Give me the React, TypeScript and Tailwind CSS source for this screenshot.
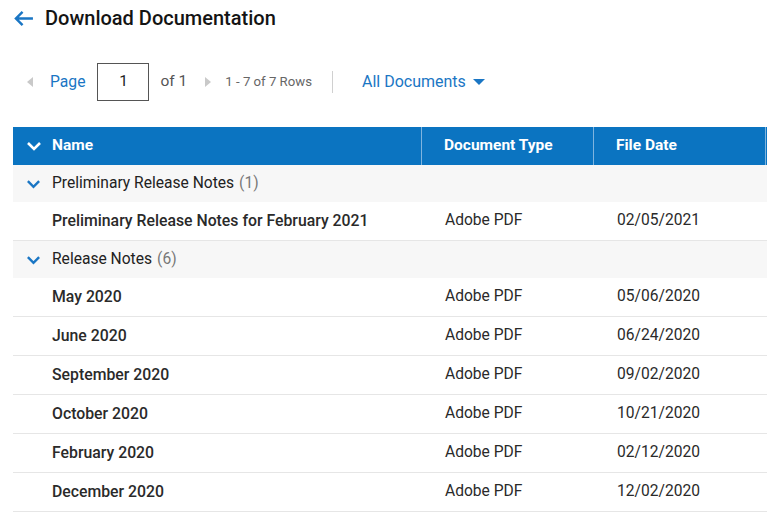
import React from 'react';

const groups = [
  {
    name: 'Preliminary Release Notes',
    rows: [{ name: 'Preliminary Release Notes for February 2021', type: 'Adobe PDF', date: '02/05/2021' }],
  },
  {
    name: 'Release Notes',
    rows: [
      { name: 'May 2020', type: 'Adobe PDF', date: '05/06/2020' },
      { name: 'June 2020', type: 'Adobe PDF', date: '06/24/2020' },
      { name: 'September 2020', type: 'Adobe PDF', date: '09/02/2020' },
      { name: 'October 2020', type: 'Adobe PDF', date: '10/21/2020' },
      { name: 'February 2020', type: 'Adobe PDF', date: '02/12/2020' },
      { name: 'December 2020', type: 'Adobe PDF', date: '12/02/2020' },
    ],
  },
];

function Chevron({ className }: { className: string }) {
  return (
    <svg viewBox="0 0 16 10" className={className} fill="none" stroke="currentColor" strokeWidth="2.6">
      <path d="M2 2l6 6 6-6" />
    </svg>
  );
}

export default function App() {
  return (
    <div className="w-[767px] h-[517px] overflow-hidden bg-white pl-[13px] font-['Roboto',sans-serif]">
      {/* Title */}
      <div className="flex items-center h-[36px] gap-[11px]">
        <svg viewBox="0 0 22 18" className="w-[21px] h-[17px] text-[#1a76c4]" fill="none" stroke="currentColor" strokeWidth="2.6">
          <path d="M21 9H3M10 2L3 9l7 7" />
        </svg>
        <h1 className="text-[20px] font-medium text-[#141414]">Download Documentation</h1>
      </div>

      {/* Pager */}
      <div className="flex items-center h-[38px] mt-[27px]">
        <span className="ml-[14px] w-0 h-0 border-y-[5px] border-y-transparent border-r-[6px] border-r-[#c9c9c9]" />
        <span className="ml-[17px] text-[15.7px] text-[#1a76c4]">Page</span>
        <div className="ml-[12px] w-[52px] h-[38px] border border-[#555] flex items-center justify-center text-[15.5px] text-[#222]">1</div>
        <span className="ml-[11px] text-[15.5px] text-[#555]">of 1</span>
        <span className="ml-[18px] w-0 h-0 border-y-[5px] border-y-transparent border-l-[6px] border-l-[#c9c9c9]" />
        <span className="ml-[14px] text-[13.2px] text-[#666]">1 - 7 of 7 Rows</span>
        <span className="ml-[20px] w-px h-[22px] bg-[#d0d0d0]" />
        <span className="ml-[29px] text-[16px] text-[#1a76c4]">All Documents</span>
        <span className="ml-[7px] w-0 h-0 border-x-[6px] border-x-transparent border-t-[6px] border-t-[#1a76c4]" />
      </div>

      {/* Table */}
      <div className="mt-[26px] w-[830px]">
        <div className="flex h-[38px] bg-[#0b74c1] text-white text-[15.5px] font-bold">
          <div className="w-[409px] flex items-center border-r border-[#7fb4df]">
            <Chevron className="ml-[13px] w-[16px] h-[10px]" />
            <span className="ml-[10px]">Name</span>
          </div>
          <div className="w-[172px] flex items-center pl-[22px] border-r border-[#7fb4df]">Document Type</div>
          <div className="w-[172px] flex items-center pl-[22px] border-r border-[#7fb4df]">File Date</div>
          <div className="flex-1" />
        </div>
        {groups.map((g) => (
          <div key={g.name}>
            <div className="flex items-center h-[37px] bg-[#f7f7f7] text-[15.6px]">
              <Chevron className="ml-[13px] w-[15px] h-[10px] text-[#1a76c4]" />
              <span className="ml-[11px] text-[#222]">{g.name}</span>
              <span className="ml-[5px] text-[#777]">({g.rows.length})</span>
            </div>
            {g.rows.map((r) => (
              <div key={r.name} className="flex items-center h-[39px] border-b border-[#e6e6e6] text-[15.6px] text-[#2a2a2a]">
                <div className="w-[409px] pl-[39px] font-medium text-[15.8px]">{r.name}</div>
                <div className="w-[172px] pl-[23px]">{r.type}</div>
                <div className="w-[172px] pl-[23px]">{r.date}</div>
              </div>
            ))}
          </div>
        ))}
      </div>
    </div>
  );
}
